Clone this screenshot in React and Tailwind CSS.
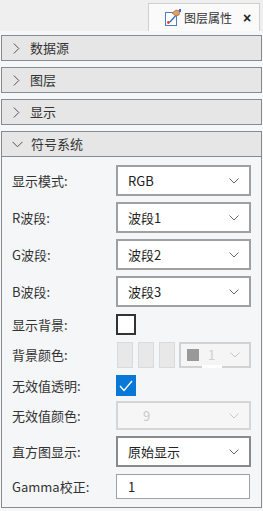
import React from 'react';

const font = "font-['Noto_Sans_CJK_SC','Noto_Sans',sans-serif]";

// 右向き / 下向きの細いシェブロン
function Chevron({ open }) {
    return open ? (
        <svg width="11" height="7" viewBox="0 0 11 7" className="shrink-0">
            <path d="M0.5 0.8 L5.5 5.8 L10.5 0.8" fill="none" stroke="#555" strokeWidth="1" />
        </svg>
    ) : (
        <svg width="7" height="11" viewBox="0 0 7 11" className="shrink-0">
            <path d="M0.8 0.5 L5.8 5.5 L0.8 10.5" fill="none" stroke="#555" strokeWidth="1" />
        </svg>
    );
}

function SelectArrow({ color = '#666' }) {
    return (
        <svg width="10" height="6" viewBox="0 0 10 6" className="shrink-0">
            <path d="M0.5 0.5 L5 5 L9.5 0.5" fill="none" stroke={color} strokeWidth="1" />
        </svg>
    );
}

function Header({ title, open }) {
    return (
        <div
            className={`h-[26px] bg-[#e6e6e6] border border-[#8a8a8a] flex items-center text-[13px] text-[#333] ${open ? 'pl-[10px] gap-[8px]' : 'pl-[11px] gap-[10px]'}`}
        >
            <Chevron open={open} />
            <span>{title}</span>
        </div>
    );
}

function Row({ label, className, children }) {
    return (
        <div className={`flex items-center ${className}`}>
            <div className="w-[104px] shrink-0 text-[13px] text-[#333] whitespace-nowrap">{label}</div>
            {children}
        </div>
    );
}

function Select({ value, border = 'border-[#a0a0a0]' }) {
    return (
        <div className={`w-[135px] h-full border-2 ${border} bg-white flex items-center justify-between pl-[10px] pr-[10px] text-[13px] text-[#222]`}>
            <span>{value}</span>
            <SelectArrow />
        </div>
    );
}

export default function App() {
    return (
        <div className={`w-[263px] h-[511px] bg-[#f6f7f9] overflow-hidden ${font}`}>
            {/* タブバー */}
            <div className="h-[31px] bg-[#efefef] flex justify-end items-end pr-[3px]">
                <div className="w-[112px] h-[28px] bg-[#fafafa] border border-b-0 border-[#cfcfcf] flex items-center pl-[16px] whitespace-nowrap">
                    <svg width="16" height="18" viewBox="0 0 16 18" className="shrink-0">
                        <rect x="0.5" y="3.5" width="11" height="13" fill="#fff" stroke="#4a7fc1" strokeWidth="1" />
                        <circle cx="3.5" cy="13.5" r="1.4" fill="#e03b3b" />
                        <path d="M5 13 L12 5" stroke="#2f6fd0" strokeWidth="1.4" />
                        <path d="M7 4 L11 1 L15 2 L14 6 L11 7 Z" fill="#e0a063" stroke="#a86a35" strokeWidth="0.7" />
                        <rect x="14" y="0" width="2" height="3" fill="#2f6fd0" />
                    </svg>
                    <span className="ml-[3px] text-[12px] text-[#333] shrink-0">图层属性</span>
                    <span className="ml-[11px] font-['Liberation_Sans',sans-serif] text-[14px] font-bold text-[#222] leading-none shrink-0">×</span>
                </div>
            </div>

            <div className="px-[1px] pt-[4px] flex flex-col gap-[6px]">
                <Header title="数据源" />
                <Header title="图层" />
                <Header title="显示" />
                <div>
                    <Header title="符号系统" open />
                    <div className="border border-t-0 border-[#8a8a8a] bg-[#f5f6f8] pl-[10px] pt-[8px] pb-[8px]">
                        <Row label="显示模式:" className="h-[31px]">
                            <Select value="RGB" />
                        </Row>
                        <Row label="R波段:" className="h-[31px] mt-[6px]">
                            <Select value="波段1" />
                        </Row>
                        <Row label="G波段:" className="h-[31px] mt-[6px]">
                            <Select value="波段2" />
                        </Row>
                        <Row label="B波段:" className="h-[31px] mt-[6px]">
                            <Select value="波段3" />
                        </Row>
                        <Row label="显示背景:" className="h-[23px] mt-[6px]">
                            <div className="w-[20px] h-[21px] border-2 border-[#333] bg-white" />
                        </Row>
                        <Row label="背景颜色:" className="h-[26px] mt-[6px]">
                            <div className="flex h-full items-stretch ml-[1px]">
                                <div className="w-[16px] bg-[#e8e8e8] border border-[#dadada]" />
                                <div className="w-[16px] bg-[#e8e8e8] border border-[#dadada] ml-[5px]" />
                                <div className="w-[16px] bg-[#e8e8e8] border border-[#dadada] ml-[5px]" />
                                <div className="relative w-[72px] ml-[4px] border-2 border-[#d2d2d2] bg-[#f5f5f5] flex items-center pl-[6px] pr-[9px]">
                                    <div className="w-[12px] h-[12px] bg-[#999]" />
                                    <span className="ml-[9px] text-[13px] text-[#cfcfcf]">1</span>
                                    <div className="ml-auto">
                                        <SelectArrow color="#c4c4c4" />
                                    </div>
                                    <div className="absolute left-[21px] bottom-[-2px] w-[20px] h-[3px] bg-white" />
                                </div>
                            </div>
                        </Row>
                        <Row label="无效值透明:" className="h-[23px] mt-[6px]">
                            <div className="w-[20px] h-[21px] bg-[#0a78d7] flex items-center justify-center">
                                <svg width="14" height="12" viewBox="0 0 14 12">
                                    <path d="M1 6 L5 10.5 L13 1" fill="none" stroke="#fff" strokeWidth="1.3" />
                                </svg>
                            </div>
                        </Row>
                        <Row label="无效值颜色:" className="h-[29px] mt-[4px]">
                            <div className="w-[135px] h-full border-2 border-[#d6d6d6] bg-[#f6f6f6] flex items-center pl-[25px] pr-[10px] text-[13px] text-[#cacaca]">
                                <span>9</span>
                                <div className="ml-auto">
                                    <SelectArrow color="#c8c8c8" />
                                </div>
                            </div>
                        </Row>
                        <Row label="直方图显示:" className="h-[31px] mt-[6px]">
                            <Select value="原始显示" border="border-[#8a8a8a]" />
                        </Row>
                        <Row label="Gamma校正:" className="h-[25px] mt-[7px]">
                            <div className="w-[134px] h-full border border-[#a0a0a0] bg-white flex items-center pl-[11px] text-[13px] text-[#222]">
                                1
                            </div>
                        </Row>
                    </div>
                </div>
            </div>
        </div>
    );
}
